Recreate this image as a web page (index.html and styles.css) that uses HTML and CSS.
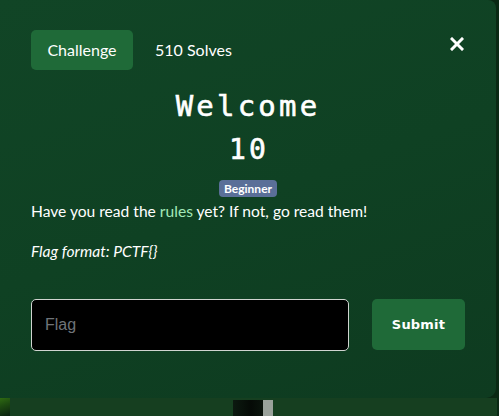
FILE: index.html
```html
<!DOCTYPE html>
<html>
<head>
<meta charset="utf-8">
<link rel="stylesheet" href="styles.css">
</head>
<body>
<div class="screen">
  <div class="modal">
    <div class="header">
      <nav class="tabs">
        <span class="tab active">Challenge</span>
        <span class="tab">510 Solves</span>
      </nav>
      <button class="close" aria-label="Close">
        <svg width="14" height="14" viewBox="0 0 14 14"><path d="M2 2 L12 12 M12 2 L2 12" stroke="#fff" stroke-width="3" stroke-linecap="square"/></svg>
      </button>
    </div>
    <h3 class="name">Welcome</h3>
    <h4 class="value">10</h4>
    <div class="tags"><span class="badge">Beginner</span></div>
    <div class="desc">
      <p>Have you read the <a href="#">rules</a> yet? If not, go read them!</p>
      <p><em>Flag format: PCTF{}</em></p>
    </div>
    <form class="submit-row">
      <input class="flag" type="text" placeholder="Flag">
      <button class="submit" type="button">Submit</button>
    </form>
  </div>
  <div class="behind">
    <div class="behind-left"></div>
    <div class="behind-main">
      <div class="spacer"></div>
      <div class="dark-block"></div>
      <div class="gray-block"></div>
    </div>
  </div>
</div>
</body>
</html>
```
FILE: styles.css
```css
html, body {
  margin: 0;
  padding: 0;
}
body {
  background: #0a2914;
  width: 499px;
  height: 416px;
  overflow: hidden;
  font-family: Lato, "Noto Sans", sans-serif;
  color: #fff;
}
.screen {
  display: flex;
  flex-direction: column;
}
.modal {
  width: 496px;
  height: 398px;
  box-sizing: border-box;
  padding: 30px 31px 0 31px;
  background: linear-gradient(160deg, #11472835 0%, #114526 0%, #0f4123 50%, #0e3b20 100%);
  border-radius: 0 8px 10px 0;
}
.header {
  display: flex;
  align-items: flex-start;
  justify-content: space-between;
  height: 40px;
}
.tabs {
  display: flex;
  align-items: center;
}
.tab {
  display: block;
  height: 40px;
  line-height: 40px;
  padding: 0 16px;
  font-size: 16px;
  border-radius: 5px;
  color: #fff;
}
.tab.active {
  background: #1f6a38;
  width: 70px;
  text-align: center;
  margin-right: 6px;
}
.close {
  background: none;
  border: 0;
  padding: 0;
  margin: 7px 1px 0 0;
  width: 14px;
  height: 14px;
  display: block;
}
.close svg { display: block; }
.name {
  margin: 19px 0 0 0;
  font-family: "DejaVu Sans Mono", monospace;
  font-weight: normal;
  -webkit-text-stroke: 0.6px #fff;
  font-size: 29px;
  line-height: 34px;
  letter-spacing: 3.2px;
  text-align: center;
}
.value {
  margin: 10px 0 0 0;
  font-family: "DejaVu Sans Mono", monospace;
  font-weight: normal;
  -webkit-text-stroke: 0.6px #fff;
  font-size: 28px;
  line-height: 34px;
  letter-spacing: 3.2px;
  text-align: center;
  padding-left: 2px;
}
.tags {
  display: flex;
  justify-content: center;
  margin-top: 13px;
}
.badge {
  display: block;
  height: 17px;
  line-height: 17px;
  padding: 0 5px;
  background: #5a6f98;
  border-radius: 4px;
  font-size: 12px;
  font-weight: bold;
  color: #fff;
}
.desc {
  margin-top: 2px;
}
.desc p {
  margin: 0 0 16px 0;
  font-size: 15.6px;
  line-height: 24px;
}
.desc a {
  color: #a3e9b9;
  text-decoration: none;
}
.submit-row {
  display: flex;
  gap: 23px;
  margin: 36px 0 0 0;
}
.flag {
  width: 318px;
  height: 52px;
  box-sizing: border-box;
  background: #000;
  border: 1px solid #d0d4d0;
  border-radius: 5px;
  padding: 0 13px;
  font-family: "Liberation Sans", Arial, sans-serif;
  font-size: 16px;
  color: #fff;
  outline: none;
}
.flag::placeholder {
  color: #6f7479;
}
.submit {
  width: 93px;
  height: 51px;
  background: #1f6a38;
  border: 0;
  border-radius: 5px;
  color: #fff;
  font-family: "DejaVu Sans", Verdana, sans-serif;
  font-weight: bold;
  font-size: 13px;
  letter-spacing: 0.2px;
}
.behind {
  display: flex;
  height: 18px;
}
.behind-left {
  width: 10px;
  background: linear-gradient(160deg, #2f6a12 0%, #1d4a10 40%, #0a2010 100%);
}
.behind-main {
  width: 487px;
  background: #163f20;
  display: flex;
  align-items: flex-end;
}
.spacer { width: 223px; }
.dark-block {
  width: 30px;
  height: 16px;
  background: linear-gradient(90deg, #0c1a10, #050a06 60%, #0a140c);
}
.gray-block {
  width: 10px;
  height: 16px;
  background: #9aa29b;
}
```
